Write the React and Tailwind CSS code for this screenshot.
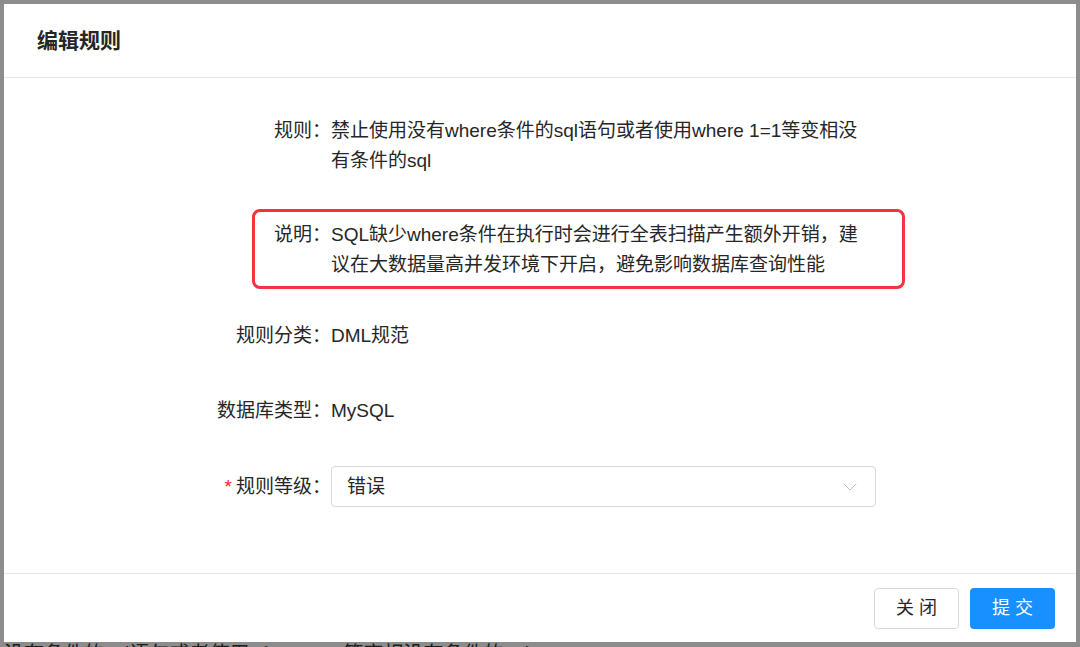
import { ChevronDown } from 'lucide-react'

const FONT = { fontFamily: '"Liberation Sans", "Noto Sans CJK SC", sans-serif' }

function Row({ label, required, children, className = '' }) {
  return (
    <div className={`flex ${className}`}>
      <div className="w-[327px] shrink-0 text-right whitespace-nowrap">
        {required && <span className="text-[#f5222d] mr-[4px]">*</span>}
        {label}：
      </div>
      <div className="w-[545px]">{children}</div>
    </div>
  )
}

export default function App() {
  return (
    <div className="relative h-[647px] w-[1080px] overflow-hidden bg-[#8c8c8c]" style={FONT}>
      {/* page behind the mask */}
      <div className="pt-[639px] pl-[4px] text-[20px] leading-[30px] text-[#1c1c1c] whitespace-nowrap">
        没有条件的sql语句或者使用where 1=1等变相没有条件的sql
      </div>

      <div className="absolute left-[4px] top-[4px] w-[1072px] h-[638px] bg-white flex flex-col text-[#262626]">
        <div className="h-[74px] shrink-0 border-b border-[#e8e8e8] flex items-center pl-[33px]">
          <h1 className="text-[21px] font-semibold text-[#262626]">编辑规则</h1>
        </div>

        <div className="relative flex-1 pt-[38px] text-[19px] leading-[30px]">
          <Row label="规则">
            <div className="whitespace-nowrap">禁止使用没有where条件的sql语句或者使用where 1=1等变相没</div>
            <div className="whitespace-nowrap">有条件的sql</div>
          </Row>
          <Row label="说明" className="mt-[44px]">
            <div className="whitespace-nowrap">SQL缺少where条件在执行时会进行全表扫描产生额外开销，建</div>
            <div className="whitespace-nowrap">议在大数据量高并发环境下开启，避免影响数据库查询性能</div>
          </Row>
          <Row label="规则分类" className="mt-[41px]">
            DML规范
          </Row>
          <Row label="数据库类型" className="mt-[45px]">
            MySQL
          </Row>
          <Row label="规则等级" required className="mt-[40px] items-center">
            <div className="h-[41px] border border-[#d9d9d9] rounded-[4px] flex items-center justify-between pl-[15px] pr-[13px]">
              <span>错误</span>
              <ChevronDown className="w-[24px] h-[24px] text-[#bfbfbf]" strokeWidth={1} />
            </div>
          </Row>

          {/* annotation */}
          <div className="absolute left-[248px] top-[131px] w-[653px] h-[80px] border-[3px] border-[#f5333f] rounded-[8px] pointer-events-none" />
        </div>

        <div className="h-[69px] shrink-0 border-t border-[#e8e8e8] flex items-center justify-end gap-[11px] pr-[21px]">
          <button className="w-[85px] h-[41px] border border-[#d9d9d9] rounded-[4px] bg-white text-[18px] text-[#262626]">
            关 闭
          </button>
          <button className="w-[85px] h-[41px] rounded-[4px] bg-[#1890ff] text-[18px] text-white">
            提 交
          </button>
        </div>
      </div>
    </div>
  )
}
